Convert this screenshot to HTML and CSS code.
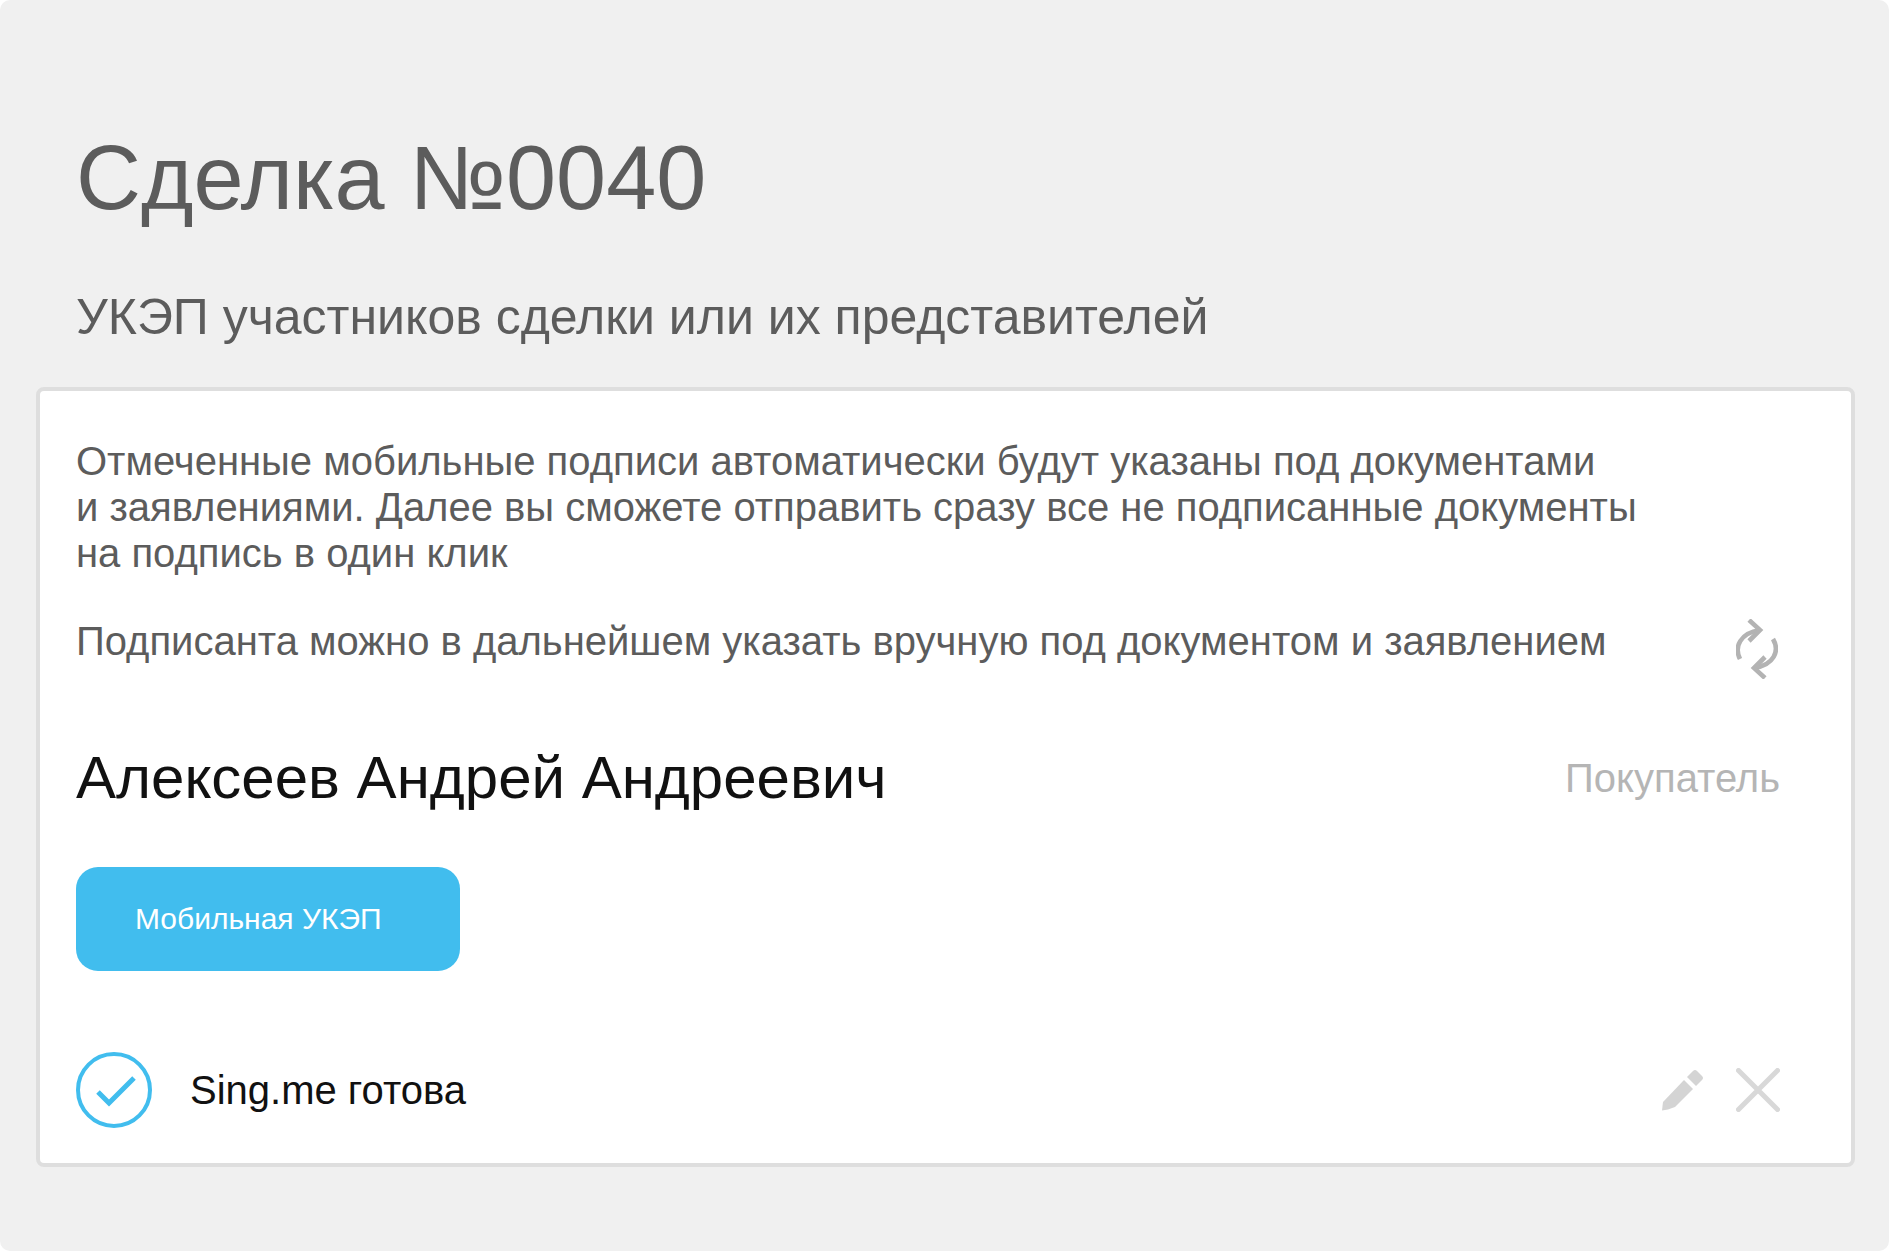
FILE: index.html
```html
<!DOCTYPE html>
<html lang="ru">
<head>
    <meta charset="UTF-8">
    <title>Сделка №0040</title>
    <link rel="stylesheet" href="styles.css">
</head>
<body>
    <div class="screen">
        <h1 class="title">Сделка №0040</h1>
        <h2 class="subtitle">УКЭП участников сделки или их представителей</h2>

        <div class="card">
            <p class="note">Отмеченные мобильные подписи автоматически будут указаны под документами<br>и заявлениями. Далее вы сможете отправить сразу все не подписанные документы<br>на подпись в один клик</p>

            <div class="hint-row">
                <p class="note">Подписанта можно в дальнейшем указать вручную под документом и заявлением</p>
                <svg class="icon-sync" width="42" height="60" viewBox="0 0 42 60" fill="none" stroke="#b3b3b3" stroke-width="4.600">
                    <path d="M4 40 C-2 28 4 14 24 11"/>
                    <path d="M13 1 L24 11 L13 22"/>
                    <path d="M37 20 C44 32 38 46 18 49"/>
                    <path d="M29 38 L18 49 L29 59"/>
                </svg>
            </div>

            <div class="person-row">
                <div class="person-name">Алексеев Андрей Андреевич</div>
                <div class="person-role">Покупатель</div>
            </div>

            <button class="sign-btn">Мобильная УКЭП</button>

            <div class="status-row">
                <svg class="icon-check" width="76" height="76" viewBox="0 0 76 76" fill="none" stroke="#41bdee">
                    <circle cx="38" cy="38" r="36" stroke-width="4"/>
                    <path d="M22 40 L33 51 L58 26" stroke-width="5"/>
                </svg>
                <div class="status-text">Sing.me готова</div>
                <svg class="icon-edit" width="42" height="42" viewBox="0 0 42 42" fill="#d4d4d4">
                    <path d="M22 11 L31 20 L13 38 L6 40.500 L0 41.500 L1 33 Z"/>
                    <path d="M25 8 L31 2 Q33 0 35 2 L40 7 Q42 9 40 11 L34 17 Z"/>
                </svg>
                <svg class="icon-close" width="44" height="44" viewBox="0 0 44 44" fill="none" stroke="#d8d8d8" stroke-width="5" stroke-linecap="round">
                    <path d="M2.500 2.500 L41.500 41.500 M41.500 2.500 L2.500 41.500"/>
                </svg>
            </div>
        </div>
    </div>
</body>
</html>
```

FILE: styles.css
```css
body {
    margin: 0;
    background-color: white;
    font-family: "Liberation Sans", Arial, sans-serif;
}
.screen {
    height: 1251px;
    box-sizing: border-box;
    padding: 128px 34px 0 36px;
    background-color: #f0f0f0;
    border-radius: 10px;
}
.title {
    margin: 0 0 0 40px;
    font-size: 90px;
    line-height: 100px;
    font-weight: normal;
    color: #5c5c5c;
}
.subtitle {
    margin: 61px 0 0 40px;
    font-size: 50px;
    line-height: 56px;
    font-weight: normal;
    color: #5c5c5c;
}
.card {
    margin-top: 42px;
    height: 780px;
    box-sizing: border-box;
    padding: 47px 71px 0 36px;
    background-color: white;
    border: 4px solid #dedede;
    border-radius: 8px;
}
.note {
    margin: 0;
    font-size: 40px;
    line-height: 46px;
    color: #5c5c5c;
}
.hint-row {
    display: flex;
    justify-content: space-between;
    align-items: flex-start;
    margin-top: 42px;
}
.icon-sync {
    margin: 1px 2px 0 0;
}
.person-row {
    display: flex;
    justify-content: space-between;
    align-items: center;
    margin-top: 64px;
}
.person-name {
    font-size: 60px;
    line-height: 70px;
    color: #111;
}
.person-role {
    font-size: 40px;
    color: #b5b5b5;
}
.sign-btn {
    display: block;
    width: 384px;
    height: 104px;
    margin-top: 54px;
    padding: 0 0 0 59px;
    border: none;
    border-radius: 22px;
    background-color: #41bdee;
    color: white;
    font-family: inherit;
    font-size: 30px;
    text-align: left;
}
.status-row {
    display: flex;
    align-items: center;
    margin-top: 81px;
}
.status-text {
    flex: 1;
    margin-left: 38px;
    font-size: 40px;
    color: #111;
}
.icon-edit {
    margin-right: 32px;
}
```
